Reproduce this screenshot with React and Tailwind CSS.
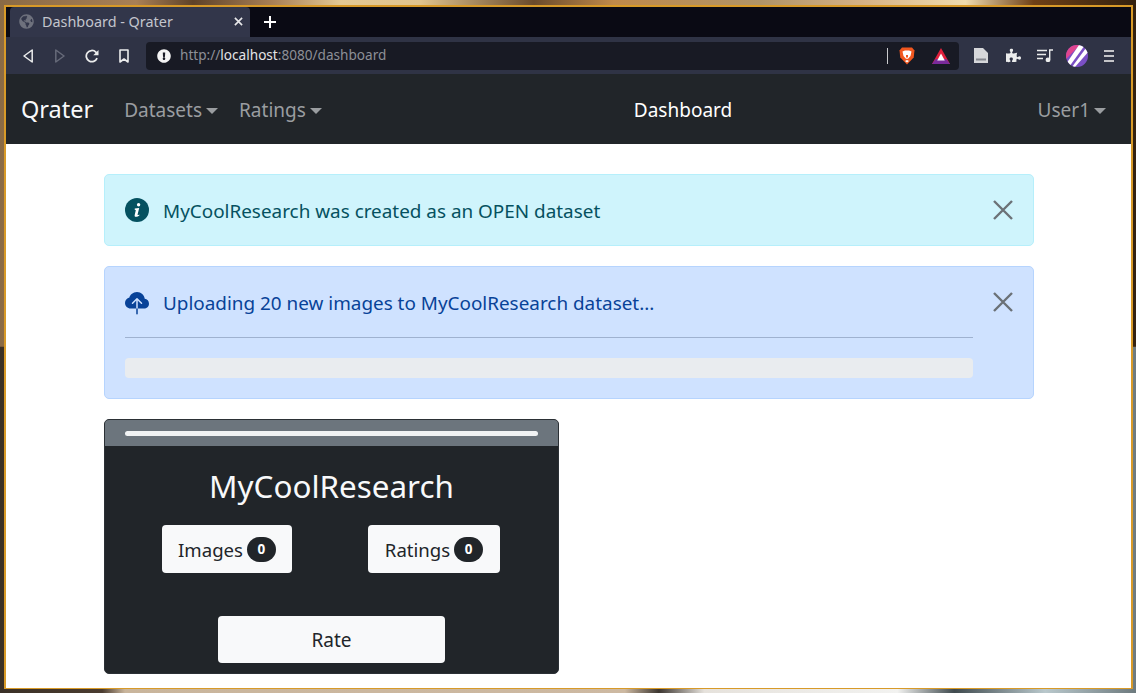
import { FaPuzzlePiece, FaExclamationCircle, FaGlobeAmericas } from 'react-icons/fa';
import { BsCloudUploadFill } from 'react-icons/bs';

function CloseIcon({ className }) {
    return (
        <svg viewBox="0 0 20 20" className={className} fill="none" stroke="#6b7177" strokeWidth="2.4">
            <path d="M1 1L19 19M19 1L1 19" />
        </svg>
    );
}

function InfoIcon() {
    return (
        <svg viewBox="0 0 24 24" className="h-6 w-6">
            <circle cx="12" cy="12" r="12" fill="#055160" />
            <circle cx="13.6" cy="6.8" r="1.7" fill="#fff" />
            <path d="M9.8 10.6L14.2 10L12.6 16.4C12.5 17 13 17.2 14.2 16.4L14.5 17.2C13 18.6 11.8 19 10.6 18.8C9.7 18.6 9.5 17.8 9.7 16.9L10.8 12.2L9.6 11.6Z" fill="#fff" />
        </svg>
    );
}

function Caret() {
    return <span className="ml-[4px] inline-block align-[3px] border-x-[6.5px] border-t-[6px] border-x-transparent border-t-current"></span>;
}

function BrowserChrome() {
    return (
        <div className="font-['Noto_Sans',sans-serif]">
            {/* Tab strip */}
            <div className="flex h-[30px] items-stretch bg-[#0a0a14] pl-1">
                <div className="flex w-[240px] items-center rounded-t-[4px] bg-[#32364a] pb-px pl-[9px] pr-[7px] text-[14.4px] text-[#c3c5cd]">
                    <FaGlobeAmericas className="h-[15px] w-[15px] text-[#6e717d]" />
                    <span className="ml-[8px] flex-1">Dashboard - Qrater</span>
                    <svg viewBox="0 0 10 10" className="h-[9px] w-[9px]" fill="none" stroke="#e8e8ea" strokeWidth="1.8">
                        <path d="M1 1L9 9M9 1L1 9" />
                    </svg>
                </div>
                <div className="ml-[14px] flex items-center">
                    <svg viewBox="0 0 12 12" className="h-3 w-3" fill="none" stroke="#fff" strokeWidth="2">
                        <path d="M6 0V12M0 6H12" />
                    </svg>
                </div>
            </div>

            {/* Toolbar */}
            <div className="flex h-[37px] items-center bg-[#2f3345]">
                <div className="flex w-[140px] items-center pl-[17px]">
                    <svg viewBox="0 0 10 14" className="h-[14px] w-[10px]" fill="none" stroke="#eceded" strokeWidth="1.5" strokeLinejoin="round">
                        <path d="M9.2 1V13L1 7Z" />
                    </svg>
                    <svg viewBox="0 0 10 14" className="ml-[22px] h-[14px] w-[10px]" fill="none" stroke="#666a79" strokeWidth="1.5" strokeLinejoin="round">
                        <path d="M0.8 1V13L9 7Z" />
                    </svg>
                    <svg viewBox="0 0 16 16" className="ml-[20px] h-[14px] w-[14px]" fill="none" stroke="#eceded" strokeWidth="2">
                        <path d="M13.8 10.5A6.4 6.4 0 1 1 12.4 3.6L14.4 5.8" />
                        <path d="M15.4 1V7H9.4Z" fill="#eceded" stroke="none" />
                    </svg>
                    <svg viewBox="0 0 10 14" className="ml-[20px] h-[14px] w-[10px]" fill="none" stroke="#eceded" strokeWidth="1.6" strokeLinejoin="round">
                        <path d="M1 1H9V13L5 10L1 13Z" />
                    </svg>
                </div>
                <div className="flex h-7 w-[813px] items-center rounded-[4px] bg-[#181a24] pl-[11px] pr-[9px]">
                    <FaExclamationCircle className="h-[14px] w-[14px] text-[#f4f4f4]" />
                    <span className="ml-[9px] flex-1 text-[13.6px] text-[#8d8f97]">
                        http://<span className="text-[#e4e4e6]">localhost</span>:8080/dashboard
                    </span>
                    <div className="h-4 w-px bg-[#c9cacd]"></div>
                    {/* Brave shield */}
                    <svg viewBox="0 0 16 18" className="ml-[11px] h-[18px] w-4">
                        <path d="M3 0.5H13L15.5 3.5L14.7 10.5L8 17.5L1.3 10.5L0.5 3.5Z" fill="#f1571f" />
                        <path d="M3.5 4.5L6 3.5H10L12.5 4.5L11.5 9L8.8 12L8 11.6L7.2 12L4.5 9Z" fill="#fff" />
                        <path d="M7 8H9V10.5H7Z" fill="#f1571f" />
                        <path d="M8 13L10 14L8 15.5L6 14Z" fill="#fff" />
                    </svg>
                    {/* Rewards triangle */}
                    <svg viewBox="0 0 18 16" className="ml-[17px] h-4 w-[18px]">
                        <path d="M9 0L18 16H0Z" fill="#e0203c" />
                        <path d="M0 16L3.6 11H14.4L18 16Z" fill="#7a2a9a" />
                        <path d="M9 5.5L12.8 12.5H5.2Z" fill="#fff" />
                    </svg>
                </div>
                <svg viewBox="0 0 14 15" className="ml-[15px] h-[15px] w-[14px]">
                    <path d="M0 0H9L14 5V15H0Z" fill="#d6d7da" />
                    <path d="M2 10.5H12V12.5H2Z" fill="#85878f" />
                </svg>
                <FaPuzzlePiece className="ml-[18px] h-[15px] w-[15px] text-[#eceded]" />
                <svg viewBox="0 0 16 13" className="ml-[16px] h-[13px] w-4" fill="none" stroke="#eceded" strokeWidth="1.4">
                    <path d="M0 1.5H10M0 5.5H9M0 9.5H6" />
                    <path d="M12.7 10.5V1H16" />
                    <circle cx="11" cy="10.8" r="1.7" fill="#eceded" />
                </svg>
                {/* Profile avatar */}
                <svg viewBox="0 0 22 22" className="ml-[13px] h-[22px] w-[22px]">
                    <defs>
                        <clipPath id="avatar-clip">
                            <circle cx="11" cy="11" r="11" />
                        </clipPath>
                    </defs>
                    <g clipPath="url(#avatar-clip)">
                        <rect width="22" height="22" fill="#7a4fc4" />
                        <path d="M0 0H14L0 14Z" fill="#e0458f" />
                        <path d="M13 0H19L3 22H-2Z" fill="#fff" />
                        <path d="M20 3H23V6L9 22H6Z" fill="#fff" />
                    </g>
                </svg>
                <svg viewBox="0 0 10 12" className="ml-[16px] h-3 w-[10px]" fill="none" stroke="#c4c4c8" strokeWidth="1.8">
                    <path d="M0 1H10M0 6H10M0 11H10" />
                </svg>
            </div>
        </div>
    );
}

function Navbar() {
    return (
        <nav className="flex h-[70px] items-center bg-[#212529] pl-[15px] pr-[25px] pt-[2px] text-[19px] text-[#9a9da0]">
            <span className="mr-[31px] text-[23.5px] text-[#f8f9fa]">Qrater</span>
            <span>Datasets<Caret /></span>
            <span className="ml-[21px]">Ratings<Caret /></span>
            <span className="ml-[312px] text-white">Dashboard</span>
            <span className="ml-auto">User1<Caret /></span>
        </nav>
    );
}

function CountButton({ label, className }) {
    return (
        <div className={`flex h-12 items-center justify-center gap-[4px] rounded-[4px] bg-[#f8f9fa] text-[18.6px] text-[#212529] ${className}`}>
            <span className="mt-[2px]">{label}</span>
            <span className="flex h-[25px] w-[29px] items-center justify-center rounded-full bg-[#212529] text-[13.5px] font-bold text-white">0</span>
        </div>
    );
}

export default function App() {
    return (
        <div className="h-[693px] w-[1136px] overflow-hidden bg-[#6b4a2c] bg-[linear-gradient(90deg,#8a6a45_0%,#a98055_12%,#5f4228_17%,#a98055_24%,#e4c994_30%,#e0c48e_37%,#6a4a2b_47%,#c08a4a_54%,#b09468_67%,#d6b285_76%,#f0dcae_85%,#6e4016_91%,#33210f_100%),linear-gradient(90deg,#3a3026_0%,#4a3c30_9%,#c9b59c_11%,#cdb9a2_55%,#3c3630_58%,#e6e2dc_62%,#f2f2f0_79%,#3f4a4e_84%,#b9c8cc_92%,#6d7a7e_100%)] bg-[length:100%_50%] bg-[position:top,bottom] bg-no-repeat pl-1 pt-[5px]">
            <div className="h-[684px] w-[1129px] border-2 border-[#d89a28] font-['Noto_Sans',sans-serif]">
                <BrowserChrome />
                <Navbar />

                <main className="h-[544px] overflow-hidden bg-white pl-[98px] pt-[30px]">
                    {/* Info alert */}
                    <div className="flex h-[72px] w-[930px] items-center rounded-[5px] border border-[#b6effb] bg-[#cff4fc] pl-5 pr-5 text-[18.9px] text-[#055160]">
                        <InfoIcon />
                        <span className="ml-[14px] mt-[2px] flex-1">MyCoolResearch was created as an OPEN dataset</span>
                        <CloseIcon className="h-5 w-5" />
                    </div>

                    {/* Upload alert */}
                    <div className="mt-5 flex h-[133px] w-[930px] items-start rounded-[5px] border border-[#b6d4fe] bg-[#cfe2ff] pl-5 pr-5 pt-[25px] text-[18.9px] text-[#084298]">
                        <div className="w-[848px]">
                            <div className="flex h-6 items-center">
                                <BsCloudUploadFill className="h-6 w-6" />
                                <span className="ml-[14px] mt-[-2px]">Uploading 20 new images to MyCoolResearch dataset...</span>
                            </div>
                            <div className="mt-[21px] h-px bg-[#9fb2d0]"></div>
                            <div className="mt-5 h-5 rounded-[4px] bg-[#e9ecef]"></div>
                        </div>
                        <CloseIcon className="ml-auto h-5 w-5" />
                    </div>

                    {/* Dataset card */}
                    <div className="mt-5 h-[255px] w-[455px] overflow-hidden rounded-[5px] border border-[#2b3035] bg-[#212529]">
                        <div className="flex h-[26px] items-center bg-[#6c757d] px-5">
                            <div className="h-[5px] w-[413px] rounded-full bg-[#f1f3f4]"></div>
                        </div>
                        <h2 className="mt-4 text-center text-[31.4px] leading-[48px] text-[#f8f9fa]">MyCoolResearch</h2>
                        <div className="ml-[57px] mt-[15px] flex w-[338px] justify-between">
                            <CountButton label="Images" className="w-[130px]" />
                            <CountButton label="Ratings" className="w-[132px]" />
                        </div>
                        <div className="ml-[113px] mt-[43px] flex h-[47px] w-[227px] items-center justify-center rounded-[4px] bg-[#f8f9fa] pt-[2px] text-[19px] text-[#212529]">
                            Rate
                        </div>
                    </div>
                </main>
            </div>
        </div>
    );
}
